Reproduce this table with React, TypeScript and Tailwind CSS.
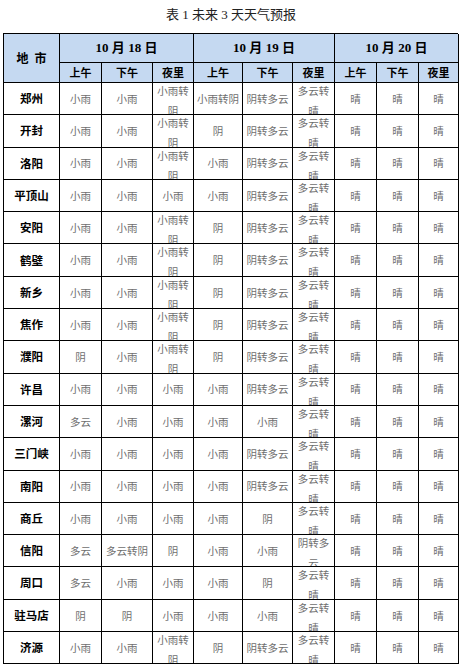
import React from 'react';

type Row = { city: string; cells: string[] };

const rows: Row[] = [
  { city: '郑州', cells: ['小雨', '小雨', '小雨转阴', '小雨转阴', '阴转多云', '多云转晴', '晴', '晴', '晴'] },
  { city: '开封', cells: ['小雨', '小雨', '小雨转阴', '阴', '阴转多云', '多云转晴', '晴', '晴', '晴'] },
  { city: '洛阳', cells: ['小雨', '小雨', '小雨转阴', '小雨', '阴转多云', '多云转晴', '晴', '晴', '晴'] },
  { city: '平顶山', cells: ['小雨', '小雨', '小雨', '小雨', '阴转多云', '多云转晴', '晴', '晴', '晴'] },
  { city: '安阳', cells: ['小雨', '小雨', '小雨转阴', '阴', '阴转多云', '多云转晴', '晴', '晴', '晴'] },
  { city: '鹤壁', cells: ['小雨', '小雨', '小雨转阴', '阴', '阴转多云', '多云转晴', '晴', '晴', '晴'] },
  { city: '新乡', cells: ['小雨', '小雨', '小雨转阴', '阴', '阴转多云', '多云转晴', '晴', '晴', '晴'] },
  { city: '焦作', cells: ['小雨', '小雨', '小雨转阴', '阴', '阴转多云', '多云转晴', '晴', '晴', '晴'] },
  { city: '濮阳', cells: ['阴', '小雨', '小雨转阴', '阴', '阴转多云', '多云转晴', '晴', '晴', '晴'] },
  { city: '许昌', cells: ['小雨', '小雨', '小雨', '小雨', '阴转多云', '多云转晴', '晴', '晴', '晴'] },
  { city: '漯河', cells: ['多云', '小雨', '小雨', '小雨', '小雨', '多云转晴', '晴', '晴', '晴'] },
  { city: '三门峡', cells: ['小雨', '小雨', '小雨', '小雨', '阴转多云', '多云转晴', '晴', '晴', '晴'] },
  { city: '南阳', cells: ['小雨', '小雨', '小雨', '小雨', '阴转多云', '多云转晴', '晴', '晴', '晴'] },
  { city: '商丘', cells: ['小雨', '小雨', '小雨', '小雨', '阴', '多云转晴', '晴', '晴', '晴'] },
  { city: '信阳', cells: ['多云', '多云转阴', '阴', '小雨', '小雨', '阴转多云', '晴', '晴', '晴'] },
  { city: '周口', cells: ['多云', '小雨', '小雨', '小雨', '阴', '多云转晴', '晴', '晴', '晴'] },
  { city: '驻马店', cells: ['阴', '阴', '小雨', '小雨', '小雨', '多云转晴', '晴', '晴', '晴'] },
  { city: '济源', cells: ['小雨', '小雨', '小雨转阴', '阴', '阴转多云', '多云转晴', '晴', '晴', '晴'] },
];

const dates = ['18', '19', '20'];
const parts = ['上午', '下午', '夜里'];

// 夜里 columns are narrow: four-character entries wrap onto a clipped second line
const narrow = new Set([2, 5, 8]);

const sans = "font-['Noto_Sans_CJK_SC',sans-serif]";
const cell = 'border-r border-b border-black overflow-hidden';

function DataCell({ text, col }: { text: string; col: number }) {
  if (narrow.has(col) && text.length > 3) {
    return (
      <div className={`${cell} flex flex-col items-center`}>
        <span className="-mt-[2px] leading-[20px]">{text.slice(0, 3)}</span>
        <span className="leading-[20px]">{text.slice(3)}</span>
      </div>
    );
  }
  return <div className={`${cell} flex items-center justify-center`}>{text}</div>;
}

export default function App() {
  return (
    <div className="bg-white w-[462px] h-[667px] overflow-hidden">
      <div className="h-[33px] flex items-center justify-center pb-[3px] text-[13px] text-[#222] font-['Liberation_Serif','Noto_Sans_CJK_SC',serif]">
        表 1 未来 3 天天气预报
      </div>

      <div
        className={`ml-[3px] w-[455px] grid grid-cols-[56px_42px_51px_41px_49px_50px_42px_42px_42px_40px] grid-rows-[29px_20px_repeat(18,32.3px)] border-l border-t border-black ${sans}`}
      >
        <div className={`${cell} row-span-2 bg-[#c5d9f1] flex items-center justify-center gap-[6px] text-[12px] font-bold text-black`}>
          <span>地</span>
          <span>市</span>
        </div>
        {dates.map((d) => (
          <div
            key={d}
            className={`${cell} col-span-3 bg-[#c5d9f1] flex items-center justify-center text-[13px] font-bold text-black font-['Liberation_Serif','Noto_Sans_CJK_SC',serif]`}
          >
            10 月 {d} 日
          </div>
        ))}
        {dates.map((d) =>
          parts.map((p) => (
            <div
              key={d + p}
              className={`${cell} bg-[#c5d9f1] flex items-center justify-center text-[11px] font-bold text-black`}
            >
              {p}
            </div>
          ))
        )}

        {rows.map((r) => (
          <React.Fragment key={r.city}>
            <div className={`${cell} flex items-center justify-center text-[11.5px] font-bold text-black`}>
              {r.city}
            </div>
            {r.cells.map((c, i) => (
              <div key={i} className="contents text-[10.5px] text-[#6e6e6e]">
                <DataCell text={c} col={i} />
              </div>
            ))}
          </React.Fragment>
        ))}
      </div>
    </div>
  );
}
